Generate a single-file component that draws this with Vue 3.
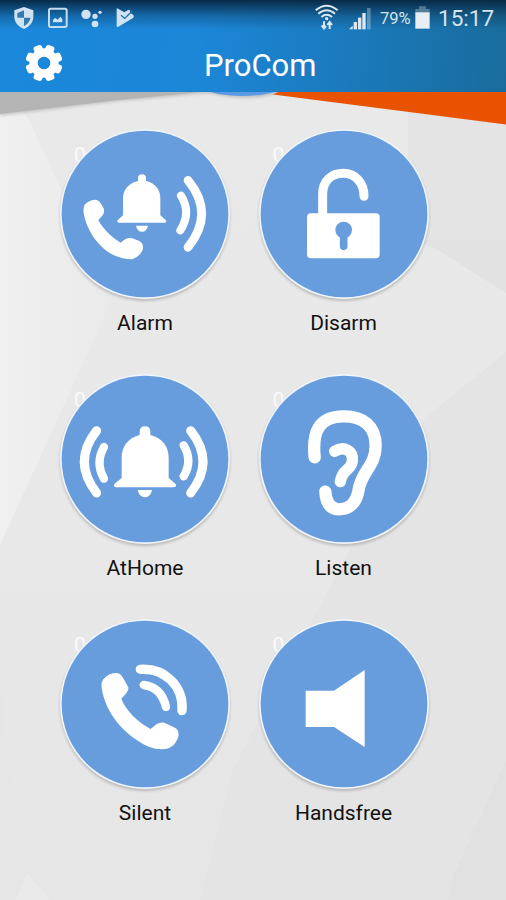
<script setup>
const rows = [
  [
    { id: 'alarm', label: 'Alarm' },
    { id: 'disarm', label: 'Disarm' }
  ],
  [
    { id: 'athome', label: 'AtHome' },
    { id: 'listen', label: 'Listen' }
  ],
  [
    { id: 'silent', label: 'Silent' },
    { id: 'handsfree', label: 'Handsfree' }
  ]
];

const gearTeeth = [22.5, 67.5, 112.5, 157.5, 202.5, 247.5, 292.5, 337.5];
</script>

<template>
  <div class="screen">
    <svg class="backdrop" viewBox="0 0 506 900" aria-hidden="true">
      <defs>
        <linearGradient id="light" x1="0" y1="0" x2="1" y2="0">
          <stop offset="0" stop-color="#f0f0f0" />
          <stop offset="1" stop-color="#eaeaea" />
        </linearGradient>
        <filter id="soft" x="-5%" y="-20%" width="110%" height="150%">
          <feGaussianBlur stdDeviation="1.5" />
        </filter>
      </defs>
      <polygon points="0,92 28,118 112,300 0,545" fill="url(#light)" />
      <polygon points="408,110 506,110 506,293 433,247 408,241" fill="#e2e2e2" />
      <polygon points="408,110 506,110 506,240 408,240" fill="#e4e4e4" />
      <polygon points="506,352 416,425 233,769 200,900 506,900" fill="#e4e4e4" />
      <polygon points="506,760 454,875 448,900 506,900" fill="#e1e1e1" />
      <polygon points="0,680 24,900 0,900" fill="#e6e6e6" />
      <polygon points="27,872 50,900 16,900" fill="#eaeaea" />
      <path d="M0 90H236Q175 97 120 101L0 116Z" fill="#999" opacity=".45" filter="url(#soft)" />
      <path d="M0 90H222Q170 95 110 101L0 114Z" fill="#b4b4b4" />
      <path d="M200 90H285L272 95Q243 101 218 95Z" fill="#999" opacity=".5" filter="url(#soft)" />
      <path d="M204 90H285L266 94Q243 98 218 94Z" fill="#5a9ae4" />
      <polygon points="280,91 506,91 506,124.500 273,94.500" fill="#e95200" />
    </svg>

    <header class="header">
      <div class="status-bar">
        <div class="status-left">
          <svg class="status-icon" viewBox="36 12 72 84">
            <path d="M72 21L100 31V53Q98 76 72 87Q45 76 43 53V31Z" fill="#d0e3f4" />
            <path d="M72 31V53H52V39ZM72 53H92Q88 69 72 78Z" fill="#347bb4" />
          </svg>
          <svg class="status-icon" viewBox="138 12 72 84">
            <rect x="147" y="26" width="53" height="55" rx="5" fill="none" stroke="#c7ddef" stroke-width="6" />
            <path d="M159 67V59L166 54L173 59L181 50L187 58V67Z" fill="#d0e3f4" />
          </svg>
          <svg class="status-icon" viewBox="240 12 72 84" fill="#d0e3f4">
            <circle cx="258" cy="43" r="14" />
            <circle cx="285" cy="49" r="8" />
            <circle cx="300" cy="37" r="5" />
            <circle cx="285" cy="72" r="10" />
          </svg>
          <svg class="status-icon" viewBox="342 12 72 84">
            <path d="M350 26Q350 23 354 26L373 37L386 29L391 39L400 45Q404 49 399 54L354 81Q350 82 350 78Z" fill="#d0e3f4" />
            <path d="M363 46L374 55L398 32" fill="none" stroke="#246fa9" stroke-width="4" />
            <path d="M367 42L374 48L389 31" fill="none" stroke="#d0e3f4" stroke-width="5" />
          </svg>
        </div>
        <div class="status-right">
          <svg class="wifi" viewBox="180 6 84 90" fill="none" stroke="#d9e7f1" stroke-width="6">
            <path d="M188 31Q221 3 254 31M196 41Q221 20 246 41M205 51Q221 38 237 51" />
            <circle cx="221" cy="56" r="5" fill="#d9e7f1" stroke="none" />
            <path d="M213 64V84M206 76L213 85L219 78M230 87V66M223 75L230 66L237 75" />
          </svg>
          <svg class="signal" viewBox="285 15 75 78" fill="#dbe8f0">
            <path d="M288 88L299 77V88Z" />
            <rect x="302" y="66" width="10" height="22" />
            <rect x="315" y="53" width="10" height="35" />
            <rect x="328" y="39" width="10" height="49" />
            <rect x="342" y="24" width="11" height="64" opacity=".35" />
          </svg>
          <span class="percent">79%</span>
          <svg class="battery" viewBox="483 12 51 78">
            <path d="M487 27H498V19H519V27H530V39H487Z" fill="#7897ab" opacity=".65" />
            <rect x="487" y="37" width="43" height="49" fill="#e7eff5" />
          </svg>
          <span class="clock">15:17</span>
        </div>
      </div>
      <div class="title-bar">
        <button class="settings" aria-label="Settings">
          <svg viewBox="74 133 114 114">
            <rect
              v-for="angle in gearTeeth"
              :key="angle"
              x="117.500"
              y="134.500"
              width="27"
              height="36"
              rx="8"
              fill="#fff"
              :transform="`rotate(${angle} 131 190)`"
            />
            <circle cx="131" cy="190" r="31.500" fill="none" stroke="#fff" stroke-width="25" />
          </svg>
        </button>
        <h1 class="title">ProCom</h1>
      </div>
    </header>

    <main class="grid">
      <div v-for="(row, index) in rows" :key="index" class="row">
        <div v-for="item in row" :key="item.id" class="cell">
          <span class="counter">0</span>
          <button class="round" :aria-label="item.label">
            <svg v-if="item.id === 'alarm'" viewBox="30 27 510 510">
              <circle cx="285" cy="282" r="250" class="disc" />
              <path class="fill" d="M264 183V175Q264 163 276 163Q288 163 288 175V183C318 190 331 211 331 235V286L348 301Q351 308 343 308H208Q200 308 203 301L219 286V235C219 211 234 190 264 183Z" />
              <path class="fill" d="M258 317H294Q290 335 276 335Q262 335 258 317Z" />
              <path class="fill" d="M104 254Q116 240 135 239Q146 239 152 250L161 265Q165 279 156 288L145 300C157 324 182 350 212 368L222 360Q233 351 247 355L268 363Q284 374 277 392Q267 411 247 418Q222 419 192 406C144 382 109 329 101 279Q99 263 104 254Z" />
              <path class="wave" stroke-width="24" d="M393 227Q425 278 391 331" />
              <path class="wave" stroke-width="26" d="M414 181Q496 281 414 382" />
            </svg>
            <svg v-else-if="item.id === 'disarm'" viewBox="27 27 510 510">
              <circle cx="282" cy="282" r="250" class="disc" />
              <path class="wave" stroke-width="27" stroke-linecap="round" d="M218 290V223C218 181 246 160 280 160C316 160 342 188 342 229" />
              <rect class="fill" x="171" y="280" width="218" height="135" rx="12" />
              <circle class="disc" cx="281" cy="330" r="25" />
              <path d="M281 338V379" class="slot" />
            </svg>
            <svg v-else-if="item.id === 'athome'" viewBox="30 27 510 510">
              <circle cx="285" cy="282" r="250" class="disc" />
              <path class="fill" d="M269 210V199Q270 184 285 184Q300 184 301 199V210C340 220 356 247 356 279V339L377 357Q381 367 370 367H200Q189 367 193 357L215 339V279C215 247 231 220 269 210Z" />
              <path class="fill" d="M263 375H306Q302 397 285 397Q268 397 263 375Z" />
              <path class="wave" stroke-width="25" d="M162 246Q135 293 162 341M401 241Q429 287 401 334" />
              <path class="wave" stroke-width="27" d="M140 197Q66 290 140 384M422 197Q496 290 422 384" />
            </svg>
            <svg v-else-if="item.id === 'listen'" viewBox="27 27 510 510">
              <circle cx="282" cy="282" r="250" class="disc" />
              <path class="wave" stroke-width="37" d="M194 277C186 199 207 155 280 154C340 153 377 184 377 242C377 305 332 319 325 379C319 411 300 433 266 433C238 432 228 409 226 380" />
              <path class="wave" stroke-width="34" d="M254 259C280 242 311 256 307 289C303 318 277 310 271 350" />
            </svg>
            <svg v-else-if="item.id === 'silent'" viewBox="30 27 510 510">
              <circle cx="285" cy="282" r="250" class="disc" />
              <path class="fill" d="M160 208Q178 187 201 189Q211 190 217 200L235 232Q237 242 229 250L214 266C226 298 260 335 302 357L319 343Q330 336 343 338L375 353Q389 361 385 380Q378 404 356 415Q329 422 296 410C220 375 165 305 155 233Q153 217 160 208Z" />
              <path class="wave" stroke-width="25" d="M281 225Q334 231 348 291" />
              <path class="wave" stroke-width="28" d="M271 178C342 173 402 227 396 302" />
            </svg>
            <svg v-else viewBox="27 27 510 510">
              <circle cx="282" cy="282" r="250" class="disc" />
              <path class="fill" d="M167 242H252L344 180V411L252 351H167Z" />
            </svg>
          </button>
          <span class="label">{{ item.label }}</span>
        </div>
      </div>
    </main>
  </div>
</template>

<style>
body {
  margin: 0;
}
</style>

<style scoped>
.screen {
  position: relative;
  width: 506px;
  height: 900px;
  overflow: hidden;
  background: linear-gradient(180deg, #e9e9e9 0%, #e8e8e8 60%, #e6e6e6 100%);
  font-family: Roboto, "Liberation Sans", sans-serif;
}

.backdrop {
  position: absolute;
  inset: 0;
  width: 506px;
  height: 900px;
}

button {
  padding: 0;
  border: 0;
  background: none;
}

svg {
  display: block;
}

/* Header */
.header {
  position: relative;
  height: 92px;
  background:
    linear-gradient(180deg, #082a46 0%, rgba(8, 42, 70, 0.72) 7%, rgba(8, 42, 70, 0.3) 18%, rgba(8, 42, 70, 0) 32%),
    linear-gradient(95deg, #1b88db 0%, #1c86d7 40%, #1b7abd 68%, #196c9c 100%);
}

.status-bar {
  display: flex;
  height: 36px;
  padding-left: 12px;
}

.status-left {
  display: flex;
  gap: 10px;
  padding-top: 4px;
}

.status-icon {
  width: 24px;
  height: 28px;
}

.status-right {
  display: flex;
  margin-left: 175px;
  color: #d5e3ed;
}

.wifi {
  width: 28px;
  height: 30px;
  margin-top: 2px;
}

.signal {
  width: 25px;
  height: 26px;
  margin: 5px 0 0 7px;
}

.percent {
  width: 34px;
  padding-left: 7px;
  font-size: 16.5px;
  line-height: 20px;
  margin-top: 9px;
}

.battery {
  width: 17px;
  height: 26px;
  margin-top: 4px;
}

.clock {
  margin: 5px 0 0 7px;
  font-size: 22.5px;
  line-height: 27px;
}

.title-bar {
  display: flex;
  height: 56px;
}

.settings {
  width: 38px;
  height: 38px;
  margin: 8px 0 0 24.5px;
}

.title {
  margin: 11px 0 0 141.5px;
  color: #fff;
  font-size: 31px;
  font-weight: 400;
  line-height: 38px;
}

/* Buttons */
.grid {
  position: relative;
  display: flex;
  flex-direction: column;
  gap: 35px;
  padding: 37px 0 0 60px;
}

.row {
  display: flex;
  gap: 28.5px;
  height: 210px;
}

.cell {
  position: relative;
  display: flex;
  flex-direction: column;
  align-items: center;
  width: 170px;
}

.counter {
  position: absolute;
  top: 14px;
  left: 14px;
  color: #fafafa;
  font-size: 21px;
  line-height: 25px;
}

.round {
  position: relative;
  width: 170px;
  height: 170px;
  border-radius: 50%;
  background: #f0f5fb;
  box-shadow: 0 2px 3px rgba(0, 0, 0, 0.2);
}

.label {
  margin-top: 12px;
  color: #111;
  font-size: 21px;
  line-height: 25px;
}

/* Icon parts */
.disc {
  fill: #689ddd;
}

.fill {
  fill: #fff;
}

.wave {
  fill: none;
  stroke: #fff;
  stroke-linecap: round;
}

.slot {
  fill: none;
  stroke: #689ddd;
  stroke-width: 23;
  stroke-linecap: round;
}
</style>
